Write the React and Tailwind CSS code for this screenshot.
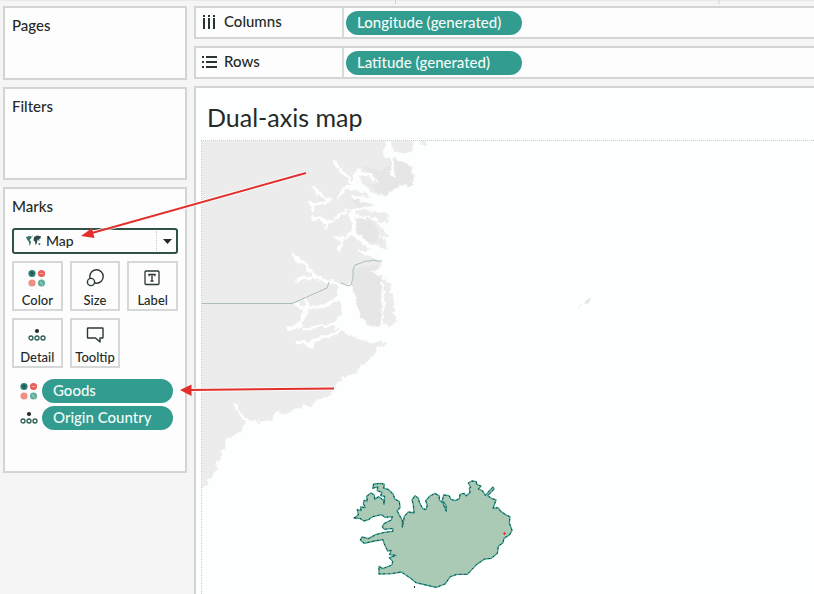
import React from "react";

const panel = "border-2 border-[#d2d5d4] bg-[#fcfdfc]";

function ColorIcon() {
  return (
    <svg className="h-[18px] w-[18px]" viewBox="0 0 18 18" aria-hidden="true">
      <circle cx="4" cy="4.5" r="3.6" fill="#2c7f78" />
      <path d="M2 4l2-2 2 2-2 3z" fill="#26413e" opacity=".6" />
      <circle cx="13.5" cy="4.5" r="3.6" fill="#e8605a" />
      <path d="M11.5 4.5h4" stroke="#f6aaa4" strokeWidth="1" />
      <circle cx="4" cy="14" r="3.6" fill="#f08f85" />
      <circle cx="13.5" cy="14" r="3.6" fill="#62ad9b" />
      <path d="M12 13l3 2.500" stroke="#b5d8ca" strokeWidth="1" />
    </svg>
  );
}

function DetailIcon() {
  return (
    <svg className="h-[14px] w-[18px]" viewBox="0 0 18 14" fill="none" aria-hidden="true">
      <circle cx="9" cy="3" r="2.100" fill="#252b2a" />
      <g stroke="#2b5d54" strokeWidth="1.300">
        <circle cx="3" cy="10" r="2" />
        <circle cx="9" cy="10" r="2" />
        <circle cx="15" cy="10" r="2" />
      </g>
    </svg>
  );
}

function SizeIcon() {
  return (
    <svg className="h-[20px] w-[20px]" viewBox="0 0 20 20" fill="#fcfdfc" stroke="#2b3836" strokeWidth="1.400" aria-hidden="true">
      <circle cx="11.500" cy="8.500" r="6.700" />
      <circle cx="6" cy="14" r="3.600" />
    </svg>
  );
}

function LabelIcon() {
  return (
    <svg className="h-[20px] w-[20px]" viewBox="0 0 20 20" fill="none" stroke="#2b3836" aria-hidden="true">
      <rect x="2" y="3" width="14" height="13.500" rx="1" strokeWidth="1.300" />
      <path d="M6 8.200V6.500h6v1.700M9 6.500v6.500M7.500 13h3" strokeWidth="1.300" />
    </svg>
  );
}

function TooltipIcon() {
  return (
    <svg className="h-[20px] w-[20px]" viewBox="0 0 20 20" fill="none" stroke="#2b3836" strokeWidth="1.400" strokeLinejoin="round" aria-hidden="true">
      <path d="M3 3h14.500q.5 0 .5.500v9q0 .5-.5.500H15v4l-4.500-4H3q-.5 0-.5-.5v-9Q2.500 3 3 3z" />
    </svg>
  );
}

function WorldIcon() {
  return (
    <svg className="h-[12px] w-[15px]" viewBox="0 0 15 12" aria-hidden="true">
      <path d="M0 2l3-1 3 .5-1 2-1.500 1.500L5 6.500 4.500 9 3.500 11 3 7 1 4.500z" fill="#34766c" />
      <path d="M8 2l3-1.500 4 .8-.5 2.200-1.500.5.500 2-2-1.500-.5 3.500L9.500 10 9 6.500 7.500 5.500z" fill="#2b4b46" />
      <path d="M12.500 8l2 .5-.5 1.500h-1.500zM6.300.5l1 .2-.5 1.300z" fill="#34766c" />
    </svg>
  );
}

function ColumnsIcon() {
  return (
    <svg className="h-[16px] w-[16px]" viewBox="0 0 16 16" fill="#283533" aria-hidden="true">
      <path d="M1 1h2v2H1zM6 1h2v2H6zM11 1h2v2h-2zM1 4h2v11H1zM6 4h2v11H6zM11 4h2v11h-2z" />
    </svg>
  );
}

function RowsIcon() {
  return (
    <svg className="h-[16px] w-[16px]" viewBox="0 0 16 16" fill="#283533" aria-hidden="true">
      <path d="M0 2h2v2H0zM0 7h2v2H0zM0 12h2v2H0zM4 2h11v2H4zM4 7h11v2H4zM4 12h11v2H4z" />
    </svg>
  );
}

function MarkButton({ icon, label }) {
  return (
    <button type="button" className="flex h-[50px] flex-col items-center justify-between border-2 border-[#d6d8d7] bg-[#fcfdfc] pt-[5px] text-[13px] leading-[18px] font-medium">
      <span className="flex h-[20px] items-center">{icon}</span>
      {label}
    </button>
  );
}

function Pill({ children, className }) {
  return (
    <button type="button" className={`h-[24px] rounded-full bg-[#319c8f] pb-[2px] pl-[11px] text-left text-[15px] leading-[22px] font-medium text-[#f4fbf8] ${className}`}>
      {children}
    </button>
  );
}

function Shelf({ icon, name, field }) {
  return (
    <div className={`flex h-[33px] items-center border-r-0 ${panel}`}>
      <div className="flex w-[148px] shrink-0 items-center gap-1.5 self-stretch border-r-2 border-[#d9dbda] pb-[2px] pl-[6px] text-[15px] font-medium">
        {icon}
        {name}
      </div>
      <Pill className="ml-[2px] w-[176px]">{field}</Pill>
    </div>
  );
}

const icelandCoast =
  "M42 147L55 138 52 122 63 125 62 114 76 116 70 103 73 94 82 96 80 82 93 72 103 78 104 91 116 83 131 94 132 106 134 82 122 80 126 70 112 65 113 53 98 58 101 45 123 43 133 46 131 58 144 61 160 76 164 90 178 98 180 116 171 125 180 142 187 155V175L193 142 205 129 222 132 220 106 216 93 225 80 235 88 239 102 248 119 258 122 262 109 257 95 270 81 285 73 298 81 298 93 308 101 319 127 318 109 307 94 311 78 327 80 333 91 346 95 358 89 360 76 373 73 378 81 390 71 388 59 392 54 385 42 395 36 409 38 410 46 423 51 415 60 427 65 436 79 451 62 459 54 462 60 450 73 443 80 454 88 468 93 463 107 459 119 474 116 482 127 500 139 510 143 508 162 516 184 509 197 492 208 489 221 475 232 472 253 454 268 434 270 410 286 382 316H351L331 323 315 345 289 355 258 348 228 341 211 327 184 309 155 314 117 315V292L128 299 156 288 158 277 148 266 168 259 149 257 154 244 143 246 133 225 129 212 103 216 73 223 61 214 66 204 85 209 107 197 133 190 158 187 159 178 133 181 127 174 132 164 154 153 157 143 135 145 125 137 98 143 87 151 72 156 60 148z";

function MapView() {
  return (
    <svg className="h-0 min-h-0 w-full flex-1 border-t border-l border-dotted border-[#c9cccb]" role="img" aria-label="Map of Iceland and eastern Greenland">
      <defs>
        <filter id="coast" filterUnits="userSpaceOnUse" x="190" y="120" width="260" height="390">
          <feTurbulence type="fractalNoise" baseFrequency=".16" numOctaves="3" seed="4" result="noise" />
          <feDisplacementMap in="SourceGraphic" in2="noise" scale="7" xChannelSelector="R" yChannelSelector="G" />
        </filter>
      </defs>
      <g transform="translate(-202 -141)">
        <g filter="url(#coast)">
          <g fill="#ececec">
            <g transform="translate(290 135) scale(.33333)">
              <path d="M-300-10H292L288 35 280 60 295 68 310 66 325 70 340 82 368 94V152L320 156 300 170 286 186 262 180 230 160 212 140 208 122 235 120 262 144 268 136 240 115 212 110 206 100 192 115 190 135 182 150 155 160 150 178 138 200 160 208 185 220 176 240 182 260 184 300 205 318 240 345H-300z" />
              <path d="M304-5H372L370 44 345 58 318 50 304 36zM385-5H418L408 30 392 26z" />
              <path d="M143 200L165 164 205 164 242 190 208 187 180 178 185 188 258 210 225 220 185 222z" />
              <path d="M190 230L240 226 296 240 290 250 300 266 272 264 262 250 200 238z" />
              <path d="M194 250L240 248 265 264 280 285 300 306 270 305 288 325 290 345 240 325 200 290z" />
            </g>
            <g transform="translate(270 240) scale(.33333)">
              <path d="M-230 0H230L270 35 320 58 338 66 330 80 310 100 325 108 345 108 350 126 362 130 362 155 372 180 370 220 378 250 355 258 340 250 338 215 332 215 330 260 300 260 275 235 265 210 262 180 248 150 245 135 215 130 205 148 200 175 208 190 215 235 190 250 215 270 260 295 300 308 352 306 330 325 315 330 300 350 275 365 262 390V400H-230z" />
            </g>
            <g transform="translate(195 340) scale(.33333)">
              <path d="M-5-10H550L575 5 540 35 530 55 510 70 480 90 460 110 435 112 447 125 425 130 415 155 395 170 365 180 350 202 325 192 310 208 290 215 265 225 245 210 235 235 210 240 190 250 165 240 150 238 125 188 112 192 130 215 150 250 145 265 120 292 95 290 90 320 80 350 65 370 65 395 50 412 40 418 35 435 22 448-5 480z" />
            </g>
          </g>
          <g fill="#e6e6e6">
            <path transform="translate(290 135) scale(.33333)" d="M215 90L240 95 270 110 300 85 310 72 366 98V150H320L286 182 232 150 268 145 240 112zM200 285L205 252 240 252 270 290 265 318 235 318zM180 190L245 210 200 216z" />
            <path transform="translate(270 240) scale(.33333)" d="M252 88L325 70 310 100 335 120 332 258H300L268 220 262 180 248 145z" />
          </g>
          <g fill="none" stroke="#fdfefe" strokeLinejoin="round" strokeLinecap="round">
            <g transform="translate(290 135) scale(.33333)" strokeWidth="9">
              <path d="M136 82L148 100 165 118 182 142M70 155L85 175 105 188 122 195 100 205 60 206M68 206V224M170 230L145 245 125 258 110 264 95 250 68 248M110 264L108 280M183 298L160 308 134 309M162 310L150 326 148 345M305 66L308 90V122" />
            </g>
            <g transform="translate(270 240) scale(.33333)" strokeWidth="10">
              <path d="M68 42L82 60 105 72 130 100 150 120 178 125 210 135 245 140M82 120L105 113 140 112M205 175L180 192 150 202 110 200 95 205 80 195M105 175L112 200 105 225 90 250 75 262 55 268M215 230L180 255 170 262 130 260 100 265M215 270L190 285 160 290 130 305 110 310 82 308M130 300V320L112 312" />
              <path d="M338 130V210" strokeWidth="7" />
              <path d="M310 100L325 88 348 90 352 105 338 115" strokeWidth="7" />
              <path d="M205 155L245 145 262 195 270 235 300 265 360 262 352 304 300 306 250 290 215 268 190 265 215 240z" fill="#fdfefe" stroke="none" />
            </g>
          </g>
        </g>
        <path d="M201 303.500H292L327 288l2-6M341 283l3 1 4 2 3-1 2-7v-8l2-5 6-2 5-2h4l3-1 4 1h5" fill="none" stroke="#a9bfb4" strokeWidth="1" />
        <path d="M577 310l3-5 2-1-4 5zM584 304l2-4 5-2-2 5z" fill="#e7e7e7" />

        <g transform="translate(340 469) scale(.33333)" strokeLinejoin="round">
          <path d={icelandCoast} fill="#abcab5" stroke="#329b8d" strokeWidth="4" />
          <path d={icelandCoast} fill="none" stroke="#1f2927" strokeWidth="3" strokeDasharray="4 11" />
        </g>
        <path d="M503 533h3v1h-3zM504 532h1v3h-1z" fill="#e0352f" />
        <path d="M414 586h1v2h-1z" fill="#1f2927" />
      </g>
    </svg>
  );
}

export default function App() {
  return (
    <div className="relative flex min-h-screen gap-[7px] overflow-hidden bg-[#f5f5f5] pt-[6px] pl-[3px] font-['Lato',sans-serif] text-[#252a29]">
      <aside className="flex w-[184px] shrink-0 flex-col gap-[7px] text-[15px] leading-[20px] font-medium">
        <section className={`h-[74px] px-[7px] pt-[7px] ${panel}`}>
          <h2>Pages</h2>
        </section>
        <section className={`h-[93px] px-[7px] pt-[7px] ${panel}`}>
          <h2>Filters</h2>
        </section>
        <section className={`h-[286px] px-[7px] pt-[7px] ${panel}`}>
          <h2>Marks</h2>
          <div className="relative mt-3">
            <select aria-label="Mark type" defaultValue="Map" className="block h-[26px] w-full appearance-none rounded-[3px] border-2 border-[#2f5148] bg-[#fcfdfc] pl-[32px] text-[14px] leading-[20px] font-medium">
              <option>Map</option>
              <option>Automatic</option>
            </select>
            <span className="pointer-events-none absolute inset-y-0 left-[14px] flex items-center">
              <WorldIcon />
            </span>
            <span className="pointer-events-none absolute inset-y-[3px] right-0 flex w-[22px] items-center justify-center border-l border-dotted border-[#c9cccb]">
              <svg className="h-[5px] w-[9px]" viewBox="0 0 9 5" fill="#252a29" aria-hidden="true">
                <path d="M0 0h9L4.500 5z" />
              </svg>
            </span>
          </div>
          <div className="mt-[7px] grid grid-cols-3 gap-[7px]">
            <MarkButton icon={<ColorIcon />} label="Color" />
            <MarkButton icon={<SizeIcon />} label="Size" />
            <MarkButton icon={<LabelIcon />} label="Label" />
            <MarkButton icon={<DetailIcon />} label="Detail" />
            <MarkButton icon={<TooltipIcon />} label="Tooltip" />
          </div>
          <div className="mt-[11px] flex flex-col gap-[3px] pr-[5px] pl-2">
            <div className="flex items-center gap-1">
              <ColorIcon />
              <Pill className="flex-1">Goods</Pill>
            </div>
            <div className="flex items-center gap-1">
              <DetailIcon />
              <Pill className="flex-1">Origin Country</Pill>
            </div>
          </div>
        </section>
      </aside>

      <main className="flex min-w-0 flex-1 flex-col gap-[7px]">
        <Shelf icon={<ColumnsIcon />} name="Columns" field="Longitude (generated)" />
        <Shelf icon={<RowsIcon />} name="Rows" field="Latitude (generated)" />
        <section className="flex flex-1 flex-col border-t-2 border-l-2 border-[#d2d5d4] bg-[#fdfefe] pl-[5px]">
          <h1 className="pt-[13px] pb-[7px] pl-[6px] text-[25px] leading-8">Dual-axis map</h1>
          <MapView />
        </section>
      </main>

      <svg className="pointer-events-none absolute inset-0 h-full w-full" fill="none" aria-hidden="true">
        <path d="M306 173L92 233M334 388.500L190 390" stroke="#fff" strokeWidth="4" opacity=".7" />
        <path d="M306 173L92 233M334 388.500L190 390" stroke="#e3302d" strokeWidth="2" />
        <path d="M81 236L92 228 94.500 238zM180 390L191.500 384.500V396z" fill="#e3302d" />
        <path d="M0 .5H814" stroke="#e8e9e9" />
        <path d="M395.500 0v4M719 0v4" stroke="#cfd2d1" />
      </svg>
    </div>
  );
}
